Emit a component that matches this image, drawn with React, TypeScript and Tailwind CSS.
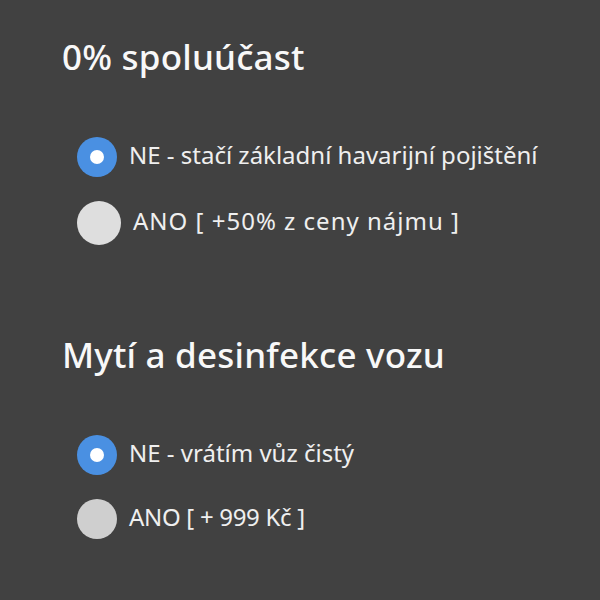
import React from 'react'

interface Option {
  label: string
  checked: boolean
  size: string
  tone: string
  spacing: string
}

const sections: { title: string; options: Option[] }[] = [
  {
    title: '0% spoluúčast',
    options: [
      { label: 'NE - stačí základní havarijní pojištění', checked: true, size: 'h-[40px] w-[40px]', tone: 'bg-[#4a90e2]', spacing: '' },
      { label: 'ANO [ +50% z ceny nájmu ]', checked: false, size: 'h-[44px] w-[44px]', tone: 'bg-[#dedede]', spacing: 'tracking-[1px]' },
    ],
  },
  {
    title: 'Mytí a desinfekce vozu',
    options: [
      { label: 'NE - vrátím vůz čistý', checked: true, size: 'h-[40px] w-[40px]', tone: 'bg-[#4a90e2]', spacing: '' },
      { label: 'ANO [ + 999 Kč ]', checked: false, size: 'h-[40px] w-[40px]', tone: 'bg-[#cfcfcf]', spacing: 'tracking-[-0.3px]' },
    ],
  },
]

function Radio({ option }: { option: Option }) {
  return (
    <label className="flex items-center gap-[12px]">
      <span className={`flex shrink-0 items-center justify-center rounded-full ${option.size} ${option.tone}`}>
        {option.checked && <span className="h-[14px] w-[14px] rounded-full bg-white" />}
      </span>
      <span className={`pb-[5px] text-[24px] leading-[24px] text-[#efefef] ${option.spacing}`}>{option.label}</span>
    </label>
  )
}

export default function App() {
  return (
    <div className="h-[600px] w-[600px] bg-[#414141] pl-[62px] pt-[39px] font-['Noto_Sans',sans-serif]">
      {sections.map((section, i) => (
        <section key={section.title} className={i > 0 ? 'mt-[92px]' : ''}>
          <h2 className="text-[35px] font-medium leading-[35px] tracking-[0.2px] text-[#f8f8f8]">{section.title}</h2>
          <div className="mt-[63px] flex flex-col gap-[24px] pl-[15px]">
            {section.options.map((option) => (
              <Radio key={option.label} option={option} />
            ))}
          </div>
        </section>
      ))}
    </div>
  )
}
